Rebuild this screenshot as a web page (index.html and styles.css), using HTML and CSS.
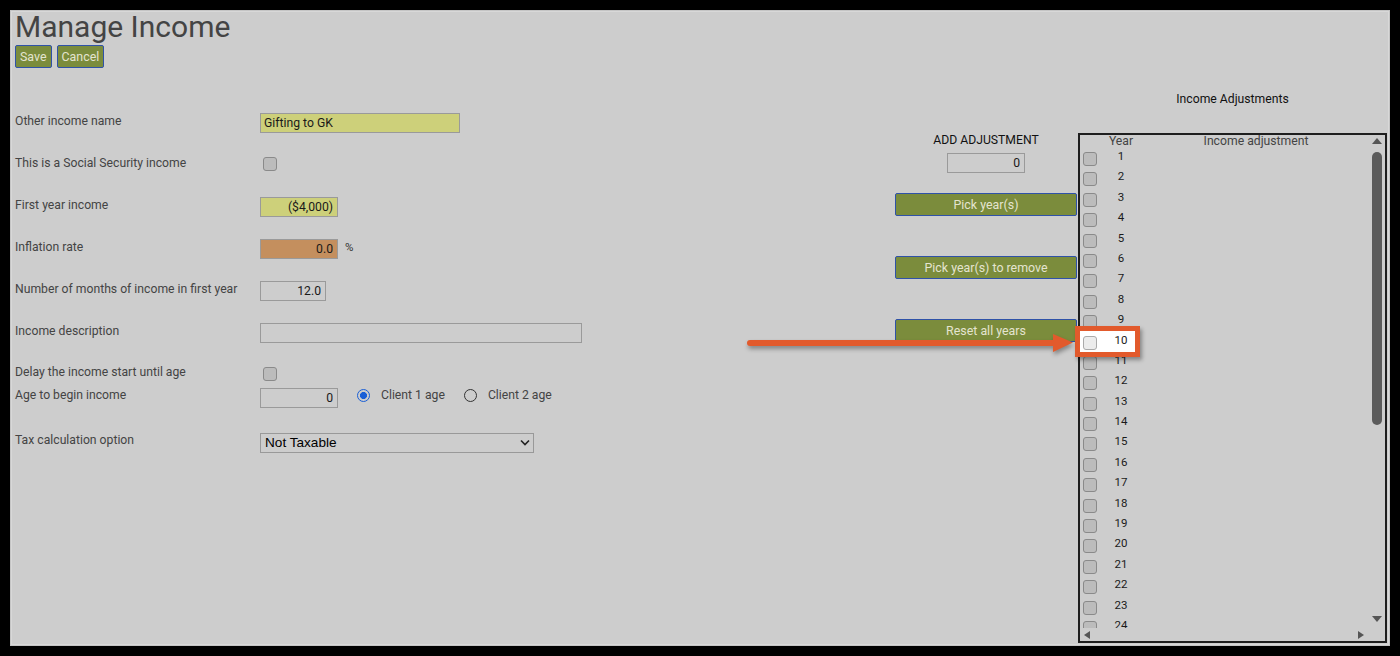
FILE: index.html
```html
<!DOCTYPE html>
<html lang="en">
<head>
<meta charset="UTF-8">
<title>Manage Income</title>
<link rel="stylesheet" href="styles.css">
</head>
<body>
<div class="frame">
  <h1 class="title">Manage Income</h1>
  <div class="actions">
    <button class="btn">Save</button>
    <button class="btn">Cancel</button>
  </div>

  <div class="content">
    <div class="form">
      <div class="field">
        <label class="lbl">Other income name</label>
        <input class="text name yellow" type="text" value="Gifting to GK">
      </div>
      <div class="field">
        <label class="lbl">This is a Social Security income</label>
        <input class="check" type="checkbox">
      </div>
      <div class="field">
        <label class="lbl">First year income</label>
        <input class="text num yellow" type="text" value="($4,000)">
      </div>
      <div class="field">
        <label class="lbl">Inflation rate</label>
        <input class="text num orange" type="text" value="0.0">
        <span class="unit">%</span>
      </div>
      <div class="field">
        <label class="lbl">Number of months of income in first year</label>
        <input class="text months" type="text" value="12.0">
      </div>
      <div class="field">
        <label class="lbl">Income description</label>
        <input class="text desc" type="text" value="">
      </div>
      <div class="field short">
        <label class="lbl">Delay the income start until age</label>
        <input class="check" type="checkbox">
      </div>
      <div class="field tall">
        <label class="lbl">Age to begin income</label>
        <input class="text num age" type="text" value="0">
        <label class="radio first"><input type="radio" name="who" checked> Client 1 age</label>
        <label class="radio"><input type="radio" name="who"> Client 2 age</label>
      </div>
      <div class="field">
        <label class="lbl">Tax calculation option</label>
        <div class="select">
          <select>
            <option>Not Taxable</option>
          </select>
          <svg class="chevron" width="10" height="7" viewBox="0 0 10 7"><path d="M1 1.5 L5 5.5 L9 1.5" fill="none" stroke="#222" stroke-width="1.6"/></svg>
        </div>
      </div>
    </div>

    <div class="controls">
      <div class="add-title">ADD ADJUSTMENT</div>
      <input class="text adj" type="text" value="0">
      <button class="btn wide">Pick year(s)</button>
      <button class="btn wide">Pick year(s) to remove</button>
      <button class="btn wide">Reset all years</button>
    </div>

    <div class="years">
      <div class="years-title">Income Adjustments</div>
      <div class="grid">
        <div class="grid-main">
          <div class="grid-list" id="list">
            <div class="grid-head">
              <span class="col-year">Year</span>
              <span class="col-adj">Income adjustment</span>
            </div>
          </div>
          <div class="vscroll">
            <span class="tri up"></span>
            <span class="thumb"></span>
            <span class="tri down"></span>
          </div>
        </div>
        <div class="hscroll">
          <span class="tri left"></span>
          <span class="tri right"></span>
          <span class="corner"></span>
        </div>
      </div>
    </div>
  </div>

  <svg class="arrow" width="350" height="36" viewBox="0 0 350 36">
    <line x1="10" y1="13" x2="318" y2="13" stroke="#e25a2c" stroke-width="6" stroke-linecap="round"/>
    <polygon points="313,4 333,12.5 313,22" fill="#e25a2c"/>
  </svg>
</div>

<script>
var list = document.getElementById('list');
for (var i = 1; i <= 24; i++) {
  var row = document.createElement('div');
  row.className = i === 10 ? 'grid-row marked' : 'grid-row';
  row.innerHTML = '<span class="box"></span><span class="col-year">' + i + '</span>';
  list.appendChild(row);
}
</script>
</body>
</html>
```

FILE: styles.css
```css
* {
  box-sizing: border-box;
}

body {
  margin: 0;
  background: #000;
  font-family: Roboto, "Liberation Sans", sans-serif;
}

.frame {
  position: relative;
  width: 1380px;
  height: 636px;
  margin: 10px;
  padding: 0 3px 0 5px;
  background: #cdcdcd;
  box-shadow: inset 0 0 0 1px #c4c4c4, inset 0 0 0 2px #d8d8d8;
  overflow: hidden;
}

.title {
  margin: 0;
  font-size: 30px;
  font-weight: 400;
  line-height: 34px;
  color: #444;
}

.actions {
  display: flex;
  gap: 5px;
  margin-top: 1px;
}

.btn {
  height: 23px;
  padding: 0 4px;
  border: 1px solid #2f52a8;
  border-radius: 2px;
  background: #7b8c3c;
  color: #e4e4d0;
  font: 12.4px Roboto, sans-serif;
  cursor: pointer;
}

/* layout */
.content {
  display: flex;
  height: 578px;
}

.form {
  width: 880px;
  padding-top: 45px;
}

.field {
  display: flex;
  align-items: flex-start;
  height: 42px;
}

.field.short {
  height: 23px;
}

.field.tall {
  height: 44px;
}

.lbl {
  width: 245px;
  padding-top: 1px;
  font-size: 12.2px;
  line-height: 15px;
  color: #444;
}

.field.short .lbl,
.field.tall .lbl {
  padding-top: 0;
}

.text {
  height: 20px;
  padding: 0 4px;
  border: 1px solid #9a9a9a;
  background: #cdcdcd;
  font: 12.2px Roboto, sans-serif;
  color: #1a1a1a;
  text-align: right;
  outline: none;
}

.yellow {
  background: #cdd07a;
}

.orange {
  background: #c48f5e;
}

.name {
  width: 200px;
  text-align: left;
  padding-left: 3px;
}

.num {
  width: 78px;
}

.months {
  width: 66px;
}

.desc {
  width: 322px;
}

.unit {
  margin: 1px 0 0 7px;
  font-size: 11.5px;
  color: #333;
}

.check {
  appearance: none;
  width: 14px;
  height: 14px;
  margin: 2px 0 0 3px;
  border: 1px solid #8a8a8a;
  border-radius: 3px;
  background: #bcbcbc;
}

.radio {
  display: flex;
  align-items: center;
  gap: 11px;
  font-size: 12.2px;
  line-height: 15px;
  color: #444;
}

.radio.first {
  margin-left: 19px;
  margin-right: 19px;
}

.radio input {
  appearance: none;
  width: 13px;
  height: 13px;
  margin: 0;
  border: 1.5px solid #333;
  border-radius: 50%;
  background: transparent;
}

.radio input:checked {
  border-color: #1a5fd6;
  background: radial-gradient(circle, #1a5fd6 0 3.2px, transparent 3.8px);
}

.select {
  position: relative;
  width: 274px;
  height: 20px;
}

.select select {
  appearance: none;
  width: 100%;
  height: 20px;
  padding: 0 4px;
  border: 1px solid #999;
  border-radius: 0;
  background: #cdcdcd;
  font: 13.6px "Liberation Sans", Arial, sans-serif;
  color: #000;
}

.chevron {
  position: absolute;
  right: 4px;
  top: 7px;
}

/* adjustment controls */
.controls {
  width: 183px;
  padding-top: 65px;
  display: flex;
  flex-direction: column;
  align-items: flex-start;
}

.add-title {
  width: 182px;
  font-size: 12.2px;
  line-height: 15px;
  color: #111;
  text-align: center;
}

.adj {
  width: 78px;
  margin: 5px 0 0 52px;
}

.btn.wide {
  width: 182px;
  margin-bottom: 40px;
}

.adj + .btn.wide {
  margin-top: 20px;
}

/* years grid */
.years {
  width: 309px;
  padding-top: 24px;
}

.years-title {
  font-size: 12.2px;
  line-height: 15px;
  color: #111;
  text-align: center;
}

.grid {
  display: flex;
  flex-direction: column;
  height: 510px;
  margin-top: 26px;
  border: 2px solid #1e1e1e;
}

.grid-main {
  display: flex;
  height: 493px;
}

.grid-list {
  flex: 1;
}

.grid-head {
  display: flex;
  height: 17px;
  padding-left: 17px;
  font-size: 12.2px;
  line-height: 13px;
  color: #444;
}

.col-year {
  width: 48px;
  text-align: center;
}

.col-adj {
  width: 222px;
  text-align: center;
}

.grid-row {
  display: flex;
  align-items: flex-start;
  height: 20.4px;
  padding-left: 3px;
}

.grid-row .col-year {
  margin-top: -2px;
  font-size: 11.5px;
  line-height: 13px;
  color: #1a1a1a;
}

.box {
  width: 14px;
  height: 14px;
  border: 1px solid #8a8a8a;
  border-radius: 3px;
  background: #bcbcbc;
}

.marked {
  position: relative;
}

.marked::before {
  content: "";
  position: absolute;
  left: 0;
  top: -5px;
  width: 55px;
  height: 21px;
  background: #fff;
  box-shadow: 0 0 0 5px #e25a2c, 2px 3px 4px 5px rgba(0, 0, 0, 0.35);
}

.marked > * {
  position: relative;
}

.marked .box {
  background: #ececec;
  border-color: #aaa;
}

.vscroll {
  display: flex;
  flex-direction: column;
  align-items: center;
  width: 16px;
  padding: 3px 0 6px;
}

.thumb {
  width: 10px;
  height: 273px;
  margin-top: 8px;
  border-radius: 5px;
  background: #5b5b5b;
}

.tri {
  width: 0;
  height: 0;
  border-style: solid;
  border-color: transparent;
}

.tri.up {
  border-width: 0 5px 6px;
  border-bottom-color: #555;
}

.tri.down {
  margin-top: auto;
  border-width: 6px 5px 0;
  border-top-color: #555;
}

.hscroll {
  position: relative;
  z-index: 1;
  display: flex;
  align-items: center;
  height: 13px;
  padding-left: 4px;
  background: #cdcdcd;
}

.tri.left {
  border-width: 4.5px 6px 4.5px 0;
  border-right-color: #555;
}

.tri.right {
  margin-left: auto;
  margin-right: 5px;
  border-width: 4.5px 0 4.5px 6px;
  border-left-color: #555;
}

.corner {
  width: 16px;
}

/* annotation */
.arrow {
  position: absolute;
  left: 730px;
  top: 320px;
  filter: drop-shadow(1px 3px 2px rgba(0, 0, 0, 0.35));
}
```
